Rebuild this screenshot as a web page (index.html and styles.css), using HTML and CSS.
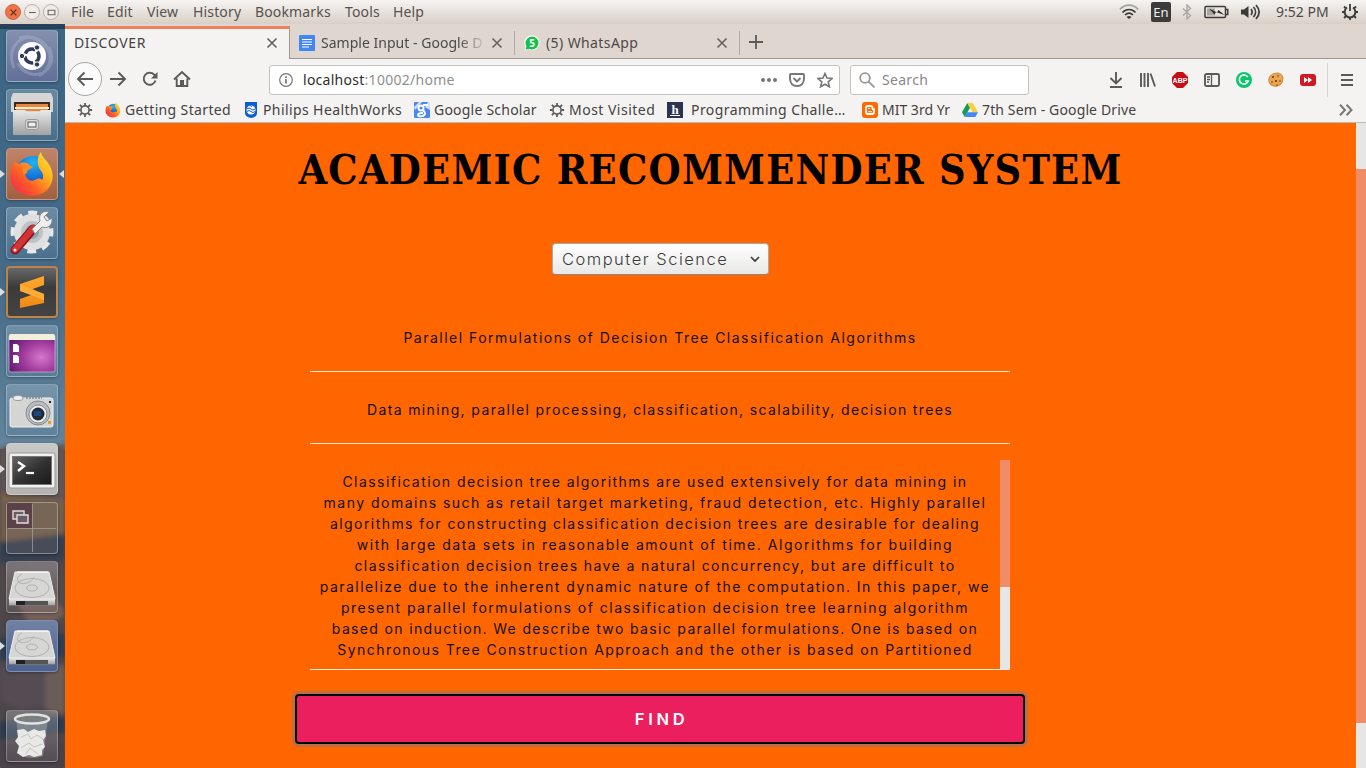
FILE: index.html
```html
<!DOCTYPE html>
<html lang="en">
<head>
<meta charset="utf-8">
<title>DISCOVER</title>
<link rel="stylesheet" href="styles.css">
</head>
<body>
<svg width="0" height="0" class="defs">
  <defs>
    <linearGradient id="metal" x1="0" y1="0" x2="0" y2="1"><stop offset="0" stop-color="#e9e9e9"/><stop offset="1" stop-color="#a2a2a2"/></linearGradient>
    <linearGradient id="blade" x1="0" y1="0" x2="0" y2="1"><stop offset="0" stop-color="#ffa92e"/><stop offset="1" stop-color="#f08a14"/></linearGradient>
    <radialGradient id="purple" cx=".7" cy=".6" r=".8"><stop offset="0" stop-color="#d578cd"/><stop offset=".5" stop-color="#a03a9c"/><stop offset="1" stop-color="#59196b"/></radialGradient>
    <linearGradient id="fire" x1="1" y1="0" x2="0" y2="1"><stop offset="0" stop-color="#fff04a"/><stop offset=".35" stop-color="#ffb01c"/><stop offset=".65" stop-color="#ff5a26"/><stop offset="1" stop-color="#e9205a"/></linearGradient>
    <radialGradient id="globe" cx=".5" cy=".2" r=".9"><stop offset="0" stop-color="#1fb6f2"/><stop offset=".6" stop-color="#1560d0"/><stop offset="1" stop-color="#3b2a96"/></radialGradient>
    <linearGradient id="screen" x1="0" y1="0" x2="1" y2="1"><stop offset="0" stop-color="#666"/><stop offset=".5" stop-color="#333"/><stop offset="1" stop-color="#191919"/></linearGradient>
    <symbol id="close" viewBox="0 0 12 12"><path d="M1.500 1.500l9 9M10.500 1.500l-9 9" stroke="#65625f" stroke-width="1.600" fill="none"/></symbol>
    <symbol id="firefox" viewBox="0 0 44 46">
      <circle cx="23" cy="22" r="17" fill="url(#globe)"/>
      <path d="M5 10C6 12 7 13 9 13C13 10 18 12 19 14L22 16C21 18 18 18 17 20C18 21 17 23 15 23C16 28 20 31 25 29C28 27 31 27 32 29C34 26 33 22 31 20C26 14 27 6 31 1C32 7 37 9 40 15C45 25 43 36 33 42C22 48 7 44 2 33C-1 25 1 16 5 10Z" fill="url(#fire)"/>
      <path d="M13 16C15 13 18 13 20 15L23 16C21 18 18 18 17 20C17 23 14 22 13 24" fill="#ff8a25"/>
    </symbol>
    <symbol id="gear" viewBox="0 0 18 18"><g fill="none" stroke="#5c5a58"><circle cx="9" cy="9" r="4.600" stroke-width="1.800"/><path d="M9 4V1M9 14v3M4 9H1M14 9h3M5.500 5.500l-2.300-2.300M12.500 12.500l2.300 2.300M5.500 12.500l-2.300 2.300M12.500 5.500l2.300-2.300" stroke-width="2"/></g></symbol>
    <symbol id="disk" viewBox="0 0 52 52">
      <path d="M9 11h34l6 27v7H3v-7z" fill="#777"/>
      <path d="M9 11h34l6 27H3z" fill="#d6d6d4" stroke="#f1f1f1"/>
      <path d="M3 38h46v6H3z" fill="url(#metal)"/><path d="M10 40h32v4H10z" fill="#555"/><path d="M10 40h9v4h-9z" fill="#222"/>
      <g fill="none" stroke="#b2b2b0"><ellipse cx="26" cy="27" rx="17" ry="9.500"/><ellipse cx="26" cy="27" rx="5.500" ry="3"/><path d="M16 13c-5 2-6 7-2 9s12-1 14-6"/></g>
      <path d="M11 11h31" stroke="#fff"/>
    </symbol>
  </defs>
</svg>

<header class="panel">
  <div class="window-buttons">
    <span class="wb wb-close"><svg viewBox="0 0 8 8"><path d="M1.500 1.500l5 5M6.500 1.500l-5 5"/></svg></span>
    <span class="wb"><svg viewBox="0 0 8 8"><path d="M1 4h6"/></svg></span>
    <span class="wb"><svg viewBox="0 0 8 8"><path d="M1 2h6v4H1z"/></svg></span>
  </div>
  <nav class="menu"><span>File</span><span>Edit</span><span>View</span><span>History</span><span>Bookmarks</span><span>Tools</span><span>Help</span></nav>
  <div class="indicators">
    <svg class="i-wifi" width="20" height="16" viewBox="0 0 20 16"><g fill="none" stroke-width="1.700"><path d="M.8 5.500C6-.3 14-.3 19.200 5.500" stroke="#a5a19d"/><path d="M3.500 8.500c3.700-4 9.300-4 13 0M6 11c2.400-2.300 5.600-2.300 8 0" stroke="#3c3b3a"/></g><path d="M7.500 13Q10 11 12.500 13L10 15z" fill="#3c3b3a"/></svg>
    <span class="lang">En</span>
    <svg class="i-bt" width="10" height="16" viewBox="0 0 10 16"><path d="M1 4.500l7.500 7L5 15V1l3.500 3.500L1 11.500" fill="none" stroke="#aaa6a2" stroke-width="1.400"/></svg>
    <svg class="i-bat" width="25" height="14" viewBox="0 0 25 14"><rect x="1" y="1.500" width="20.500" height="11" rx="1" fill="none" stroke="#3c3b3a" stroke-width="1.500"/><path d="M22 4.500h1.800v5H22" fill="none" stroke="#3c3b3a" stroke-width="1.400"/><path d="M3 3.500h8v7H3z" fill="#aaa6a2"/><path d="M5 3.500l8 4 1.500-2.500 6 5-8.500-3-1.500 2.500z" fill="#2e2d2c"/></svg>
    <svg class="i-vol" width="21" height="16" viewBox="0 0 21 16"><path d="M1 5.500h3L8.500 2v12L4 10.500H1z" fill="#3c3b3a"/><g fill="none" stroke="#3c3b3a" stroke-width="1.700"><path d="M11 5c1.500 2 1.500 4 0 6M13.500 3c2.700 3 2.700 7 0 10M16 1c4 4.500 4 9.500 0 14"/></g></svg>
    <span class="clock">9:52 PM</span>
    <svg class="i-pow" width="18" height="18" viewBox="0 0 18 18"><g fill="none" stroke="#3c3b3a"><path d="M6 4.500A5.400 5.400 0 1 0 12 4.500" stroke-width="2"/><path d="M9 1v7M9 14.500V17M3.500 9H1M14.500 9H17M4.700 5.200L3 3.500M13.300 5.200L15 3.500M5 13l-2 2M13 13l2 2" stroke-width="1.800"/></g></svg>
  </div>
</header>

<div class="desktop">
  <aside class="launcher">
    <svg class="wallpaper" width="65" height="744" viewBox="0 24 65 744" preserveAspectRatio="none">
      <defs><linearGradient id="sky" x1="0" y1="0" x2="0" y2="1"><stop offset="0" stop-color="#3c6684"/><stop offset=".6" stop-color="#466b89"/><stop offset="1" stop-color="#64859b"/></linearGradient><filter id="soft"><feGaussianBlur stdDeviation="2"/></filter></defs>
      <rect y="24" width="65" height="744" fill="#4b4649"/>
      <rect y="24" width="65" height="425" fill="url(#sky)"/>
      <g filter="url(#soft)">
        <path d="M0 448l14-3 16 5 16-2 20-5v70H0z" fill="#625457"/>
        <path d="M0 492l65 8v34L0 548z" fill="#73614e"/><path d="M0 542l65-8v25L0 562z" fill="#323f51"/>
        <path d="M0 566l30-4 35 4v60L30 640 0 610z" fill="#51484b"/><path d="M10 590l35-8 20 32-30 20z" fill="#74605a"/>
        <path d="M0 638l65-4v22l-65 4z" fill="#2c3c52"/><path d="M0 664l40-4 25 4v40l-45 6-20-10z" fill="#544b53"/>
        <path d="M45 670l20-5v50l-20-5z" fill="#6b5b57"/><path d="M0 722l65-6v16l-65 8z" fill="#2c3a50"/><path d="M0 742h65v26H0z" fill="#484349"/>
      </g>
      <path d="M0 24h65v5H0z" fill="#1b2f40" opacity=".65"/>
    </svg>
    <div class="tile t-dash"><svg viewBox="0 0 52 52"><g fill="none" stroke="#b6c0d8" stroke-opacity=".35" stroke-width="3"><path d="M8 38C-3 12 26-4 40 18M43 17c12 26-20 38-31 16M13 8c27-8 43 24 20 38"/></g><circle cx="26" cy="26" r="14" fill="#fff"/><circle cx="26" cy="26" r="7" fill="none" stroke="#303b59" stroke-width="3.500" stroke-dasharray="12 2.660" stroke-dashoffset="5"/><g fill="#303b59" stroke="#fff" stroke-width="1"><circle cx="16" cy="26" r="2.700"/><circle cx="31" cy="17.500" r="2.700"/><circle cx="31" cy="34.500" r="2.700"/></g></svg></div>
    <div class="tile t-blue"><svg viewBox="0 0 52 52"><path d="M7 4h38l2 5v14H5V9z" fill="#d5d5d5"/><path d="M8 13h36v9H8z" fill="#3b2a20"/><path d="M10 15h32v7H10z" fill="#e98742"/><path d="M9 18h34v2H9z" fill="#fff0d0"/><path d="M7 21h12l2 2h12l2-2h10v25H7z" fill="url(#metal)"/><rect x="19.500" y="30.500" width="13" height="10" rx="2.500" fill="#ddd" stroke="#999"/><rect x="22" y="33" width="8" height="5" fill="#eee" stroke="#555"/></svg></div>
    <div class="tile t-fox run"><svg viewBox="0 0 52 52"><use href="#firefox" x="4" y="3" width="44" height="46"/></svg><i class="focus-mark"></i></div>
    <div class="tile t-blue"><svg viewBox="0 0 52 52"><circle cx="26" cy="25" r="18.500" fill="none" stroke="#e8e8e8" stroke-width="6" stroke-dasharray="8.500 6.030" stroke-dashoffset="4.200"/><circle cx="26" cy="25" r="13.500" fill="none" stroke="#e0e0e0" stroke-width="9"/><circle cx="26" cy="25" r="11" fill="#bcc2c6"/><circle cx="26" cy="25" r="7" fill="#90a3b3"/><path d="M9 43l18-21" stroke="#8d1718" stroke-width="9" stroke-linecap="round"/><path d="M9 42.500l18-21" stroke="#d33334" stroke-width="6.500" stroke-linecap="round"/><path d="M26 22l8-8c-2-7 3-11 9-9l-5 5 3 4 5-3c1 8-5 11-10 9l-7 7z" fill="#eee" stroke="#888"/><circle cx="9" cy="43" r="1.500" fill="#eee"/></svg></div>
    <div class="tile t-subl run"><svg viewBox="0 0 52 52"><path d="M14 18l24-8v9l-14 5 14 4v9l-24 5v-9l14-5-14-3z" fill="url(#blade)"/><path d="M14 18v7l24 9v-6z" fill="#ffac36"/></svg></div>
    <div class="tile t-blue"><svg viewBox="0 0 52 52"><rect x="3" y="10" width="46" height="37" rx="2" fill="url(#purple)" stroke="#e6c1e5" stroke-opacity=".6"/><path d="M3 11q0-2 2-2h42q2 0 2 2v4H3z" fill="#f1f0da"/><path d="M7 19h4l2 2v6H7zM7 30h4l2 2v6H7z" fill="#fff"/></svg></div>
    <div class="tile t-blue"><svg viewBox="0 0 52 52"><rect x="4" y="14" width="43" height="29" rx="2" fill="#d5d5d3" stroke="#f1f1f1"/><path d="M6 13q5-4 11 0z" fill="#ddd" stroke="#888"/><ellipse cx="12" cy="14" rx="5" ry="2.500" fill="#eee" stroke="#999"/><path d="M20 14h16" stroke="#888" stroke-width="1.500" stroke-dasharray="2 1"/><circle cx="32" cy="29" r="12" fill="#b7bec5" stroke="#888"/><circle cx="32" cy="30" r="9" fill="#ececec" stroke="#888"/><circle cx="32" cy="30" r="6.500" fill="#222b35"/><path d="M28 27h7v5h-7z" fill="#1c4382"/><path d="M42 37h3v3h-3z" fill="#f8991d"/><path d="M43 17h2v2h-2z" fill="#222"/></svg></div>
    <div class="tile t-term run"><svg viewBox="0 0 52 52"><rect x="3" y="10" width="46" height="35" rx="2" fill="#f1f1ef" stroke="#999"/><rect x="6.500" y="13.500" width="39" height="28" fill="url(#screen)" stroke="#777"/><path d="M12 19l6 4-6 5" fill="none" stroke="#fff" stroke-width="2.400"/><path d="M20 30h8" stroke="#fff" stroke-width="2.200"/></svg></div>
    <div class="tile t-work"><svg viewBox="0 0 52 52"><path d="M1 1h25v25H1z" fill="#4a2c3d" opacity=".6"/><path d="M26.500 2v48M2 26.500h48" stroke="#a7a4a4" stroke-opacity=".7"/><g fill="#6d5c66" stroke="#ddd" stroke-width="1.400"><path d="M7 9h11v8H7z"/><path d="M11 13h11v8H11z"/></g></svg></div>
    <div class="tile t-clear"><svg viewBox="0 0 52 52"><use href="#disk" width="52" height="52"/></svg></div>
    <div class="tile t-disk run"><svg viewBox="0 0 52 52"><use href="#disk" width="52" height="52"/></svg></div>
    <div class="tile t-clear trash"><svg viewBox="0 0 52 52"><path d="M10 9l5 37q11 4 22 0l5-37z" fill="#aeb4b5" opacity=".45"/><ellipse cx="26" cy="9" rx="17" ry="4.500" fill="#7b7f80" stroke="#e1e3e3" stroke-width="2.500"/><path d="M11 20l7-1 4 3 6-3 5 2 6-1 1 6-3 4 2 7-3 3v5l-8 2-5-2-6 2-6-4 2-7-4-5 3-4z" fill="#e8e8e7"/><path d="M15 27l7-3 3 5 6-4 6 4M15 38l8-5 5 4 8-3M20 44l4-6 8 6" fill="none" stroke="#c4c4c4"/></svg></div>
  </aside>

  <main class="browser">
    <div class="tabs">
      <div class="tab active"><span>DISCOVER</span><svg width="12" height="12"><use href="#close"/></svg></div>
      <div class="tab docs"><svg class="fav" width="16" height="16"><rect width="16" height="16" rx="1" fill="#4285f4"/><path d="M3 4.500h10M3 7h10M3 9.500h10M3 12h7" stroke="#fff" stroke-width="1.200"/></svg><span class="fade">Sample Input - Google D</span><svg width="12" height="12"><use href="#close"/></svg></div>
      <div class="tab wa"><svg class="fav" width="16" height="16" viewBox="0 0 16 16"><path d="M.5 15.500l1-4A7.500 7.500 0 1 1 5 14.600z" fill="#fff"/><circle cx="8" cy="8" r="6.500" fill="#12c04a"/><path d="M1.500 14.500l1-3.500 3 3z" fill="#12c04a"/><text x="8" y="11.700" class="badge-num">5</text></svg><span>(5) WhatsApp</span><svg width="12" height="12"><use href="#close"/></svg></div>
      <svg class="plus" width="14" height="14"><path d="M7 0v14M0 7h14" stroke="#5c5a58" stroke-width="1.800"/></svg>
    </div>

    <div class="toolbar">
      <div class="nav-buttons">
        <span class="back"><svg width="18" height="16" viewBox="0 0 18 16"><path d="M17 8H2M8.500 1.500L2 8l6.500 6.500"/></svg></span>
        <span><svg width="18" height="16" viewBox="0 0 18 16"><path d="M1 8h15M9.500 1.500L16 8l-6.500 6.500"/></svg></span>
        <span><svg width="16" height="16" viewBox="0 0 16 16"><path d="M13.500 9.500A6 6 0 1 1 12 3.500L14 5.500"/><path d="M15.500 1v6.500H9z" class="solid"/></svg></span>
        <span><svg width="18" height="18" viewBox="0 0 18 18"><path d="M1 9.500L9 2l8 7.500M3.700 8.500V16h10.600V8.500"/><path d="M7 10h4v6H7z" class="solid"/></svg></span>
      </div>
      <div class="urlbar">
        <svg width="14" height="14" viewBox="0 0 14 14"><circle cx="7" cy="7" r="6.300" fill="none" stroke="#777" stroke-width="1.200"/><path d="M7 6v4.500M7 3.200v1.700" stroke="#777" stroke-width="1.700"/></svg>
        <span class="url">localhost<em>:10002/home</em></span>
        <svg class="dots" width="16" height="4"><g fill="#777"><circle cx="2" cy="2" r="2"/><circle cx="8" cy="2" r="2"/><circle cx="14" cy="2" r="2"/></g></svg>
        <svg class="pocket" width="16" height="14" viewBox="0 0 16 14"><path d="M1 2q0-1 1-1h12q1 0 1 1v4q-.5 7-7 7T1 6zM4.500 5L8 8.500 11.500 5" fill="none" stroke="#777" stroke-width="1.900"/></svg>
        <svg class="star" width="16" height="16" viewBox="0 0 16 16"><path d="M8 1.500l2 4.500 5 .5-3.800 3.300 1.200 5L8 12.200l-4.400 2.600 1.200-5L1 6.500 6 6z" fill="none" stroke="#777" stroke-width="1.600"/></svg>
      </div>
      <div class="search"><svg width="16" height="16" viewBox="0 0 16 16"><circle cx="6" cy="6" r="4.800"/><path d="M9.500 9.500l6 6"/></svg><span>Search</span></div>
      <div class="actions">
        <span><svg width="14" height="16" viewBox="0 0 14 16"><path d="M7 0v10.500M1.500 6L7 11.500 12.500 6M1 15h12" class="ln"/></svg></span>
        <span><svg width="16" height="14" viewBox="0 0 16 14"><path d="M1 0v14M4.500 0v14M8 0v14M10.500 0.500L15 13.500" class="ln"/></svg></span>
        <span><svg width="16" height="16" viewBox="0 0 16 16"><path d="M5 0h6l5 5v6l-5 5H5l-5-5V5z" fill="#c70d15"/><text x="8" y="11" class="abp">ABP</text></svg></span>
        <span><svg width="16" height="14" viewBox="0 0 16 14"><rect x="1" y="1" width="14" height="12" rx="1.500" class="ln"/><path d="M7.500 1v12M3 4h3M3 6.500h3M3 9h2" class="ln thin"/></svg></span>
        <span><svg width="16" height="16" viewBox="0 0 16 16"><circle cx="8" cy="8" r="8" fill="#0bc56c"/><path d="M11.800 5A4.600 4.600 0 1 0 12.300 9H9" fill="none" stroke="#fff" stroke-width="1.600"/></svg></span>
        <span><svg width="16" height="16" viewBox="0 0 16 16"><path d="M9 1q5 0 6 5 0 5-3 7-5 3-9 0-4-4-1-9 3-3 7-3z" fill="#e9a650" stroke="#cf8a40"/><g fill="#75380f"><circle cx="5" cy="5" r="1"/><circle cx="10" cy="4" r=".8"/><circle cx="8" cy="9" r="1.100"/><circle cx="4" cy="10" r=".8"/><circle cx="12" cy="9" r=".8"/><circle cx="9" cy="13" r=".8"/></g></svg></span>
        <span><svg width="16" height="12" viewBox="0 0 16 12"><rect width="16" height="12" rx="3" fill="#cf1a25"/><path d="M4 3l4 3-4 3zM8 3l4 3-4 3z" fill="#fff"/></svg></span>
      </div>
      <svg class="burger" width="12" height="12"><path d="M0 1h12M0 6h12M0 11h12" stroke="#5c5a58" stroke-width="1.900"/></svg>
    </div>

    <div class="bookmarks">
      <span><svg width="16" height="16"><use href="#gear"/></svg></span>
      <span class="b-start"><svg width="16" height="16"><use href="#firefox"/></svg>Getting Started</span>
      <span class="b-phil"><svg width="16" height="16" viewBox="0 0 16 16"><path d="M2 0h12v11q0 4-6 5-6-1-6-5z" fill="#0b5ed7"/><circle cx="8" cy="8" r="4.500" fill="#fff"/><path d="M4 7q2-2 4 0t4 0M4 9.500q2-2 4 0t4 0M7 3.500l2 1" stroke="#0b5ed7" fill="none"/></svg>Philips HealthWorks</span>
      <span class="b-schol"><svg width="16" height="16" viewBox="0 0 16 16"><rect width="16" height="16" rx="1" fill="#4a86ef"/><path d="M0 5l5-5h3L1 8zM11 5l3-5h2v8z" fill="#cfe0ff"/><circle cx="7" cy="6" r="2.500" fill="none" stroke="#fff" stroke-width="2"/><path d="M9 3h5M9 8q4 4 0 6-5 1-5-1t5-2" fill="none" stroke="#fff" stroke-width="2"/></svg>Google Scholar</span>
      <span class="b-most"><svg width="16" height="16"><use href="#gear"/></svg>Most Visited</span>
      <span class="b-prog"><svg width="16" height="16" viewBox="0 0 16 16"><rect width="16" height="16" fill="#2b3353"/><text x="8" y="12" class="hlet">h</text><path d="M3 13.500h10" stroke="#fff"/></svg>Programming Challe…</span>
      <span class="b-mit"><svg width="16" height="16" viewBox="0 0 16 16"><rect width="16" height="16" rx="3" fill="#ff6a00"/><path d="M6 4h2.500q2 0 2 2t1.500 1.500v2.500q0 2-2 2H6q-2 0-2-2V6q0-2 2-2z" fill="none" stroke="#fff" stroke-width="1.800"/><path d="M6 6.500h2M6 9.700h4" stroke="#fff"/></svg>MIT 3rd Yr</span>
      <span class="b-drive"><svg width="16" height="14" viewBox="0 0 16 14"><path d="M5.300 0L0 9.300 2.700 14 8 4.700z" fill="#159c58"/><path d="M5.300 0h5.400L16 9.300h-5.400z" fill="#ffcd40"/><path d="M2.700 14l2.600-4.700H16L13.300 14z" fill="#4386f5"/></svg>7th Sem - Google Drive</span>
      <svg class="more" width="14" height="12" viewBox="0 0 14 12"><path d="M1 .8L6 6l-5 5.200M7.500.8L12.500 6l-5 5.200"/></svg>
    </div>

    <div class="viewport">
      <div class="page">
        <h1>ACADEMIC RECOMMENDER SYSTEM</h1>
        <div class="form">
          <div class="select"><span>Computer Science</span><svg width="10" height="7" viewBox="0 0 10 7"><path d="M1 1l4 4 4-4" fill="none" stroke="#3c3b3a" stroke-width="1.700"/></svg></div>
          <div class="field f-title">Parallel Formulations of Decision Tree Classification Algorithms</div>
          <div class="field f-keys">Data mining, parallel processing, classification, scalability, decision trees</div>
          <div class="area">
            <p><span class="l1">Classification decision tree algorithms are used extensively for data mining in</span><span class="l2">many domains such as retail target marketing, fraud detection, etc. Highly parallel</span><span class="l3">algorithms for constructing classification decision trees are desirable for dealing</span><span class="l4">with large data sets in reasonable amount of time. Algorithms for building</span><span class="l5">classification decision trees have a natural concurrency, but are difficult to</span><span class="l6">parallelize due to the inherent dynamic nature of the computation. In this paper, we</span><span class="l7">present parallel formulations of classification decision tree learning algorithm</span><span class="l8">based on induction. We describe two basic parallel formulations. One is based on</span><span class="l9">Synchronous Tree Construction Approach and the other is based on Partitioned</span></p>
            <div class="area-scroll"><i></i></div>
          </div>
          <div class="find">FIND</div>
        </div>
      </div>
      <div class="page-scroll"><i></i></div>
    </div>
  </main>
</div>
</body>
</html>
```
FILE: styles.css
```css
* { box-sizing: border-box; }
body { margin: 0; width: 1366px; height: 768px; overflow: hidden; font: 14px/20px "Noto Sans", "Open Sans", sans-serif; color: #4c4a48; }
svg { display: block; flex: none; }
.defs { position: absolute; }

.panel { height: 24px; display: flex; align-items: center; background: linear-gradient(#f6f4f2, #d9cfc6); }
.window-buttons { display: flex; gap: 3px; width: 71px; padding-left: 5px; }
.wb { width: 16px; height: 16px; border-radius: 50%; border: 1px solid #b9b0a7; background: #f1ece7; display: grid; place-items: center; }
.wb svg { width: 9px; height: 9px; fill: none; stroke: #6b655f; }
.wb-close { background: #ef7347; border-color: #c8694b; }
.wb-close svg { stroke: #5a2a19; }
.menu { display: grid; grid-template-columns: 36px 40px 46px 62px 90px 48px 40px; color: #56524e; white-space: nowrap; letter-spacing: .15px; }
.indicators { margin-left: auto; display: flex; align-items: center; padding-right: 7px; }
.lang { width: 20px; height: 20px; margin: 0 12px; background: #3c3b3a; border-radius: 2px; color: #eee; font-size: 13px; text-align: center; }
.i-bat { margin: 0 11px 0 12px; }
.i-bt { margin-left: -1px; }
.clock { width: 53px; margin: 0 12px 0 15px; white-space: nowrap; color: #4c4a48; }

.desktop { display: flex; height: 744px; }
.launcher { position: relative; width: 65px; display: flex; flex-direction: column; gap: 7px; padding: 6px 7px 6px 6px; border-right: 1px solid #70a3bb; }
.wallpaper { position: absolute; left: 0; top: 0; }
.tile { position: relative; width: 52px; height: 52px; flex: none; border-radius: 4px; border: 1px solid rgba(200,220,235,.4); box-shadow: 0 1px 3px rgba(0,0,0,.3); }
.tile svg { width: 52px; height: 52px; margin: -1px; }
.t-dash { background: linear-gradient(#8590ad, #626f98); }
.t-blue { background: linear-gradient(rgba(155,180,200,.45), rgba(90,125,155,.3)); }
.t-fox { background: linear-gradient(#c08468, #a4603e); border-color: #c59a84; }
.t-subl { background: linear-gradient(#676767, #3b3b3b 40%, #444); border: 2px solid #bd8448; }
.t-subl svg { margin: -2px; }
.t-term { background: linear-gradient(#c9c9c8, #b4b3b2); border-color: #ccc; }
.t-work { background: rgba(130,115,110,.25); border-color: rgba(220,210,210,.45); }
.t-clear { background: linear-gradient(rgba(190,185,190,.4), rgba(130,120,125,.2)); border-color: rgba(210,200,200,.4); }
.t-disk { background: linear-gradient(#7181a3, #4b608e); border-color: #7f8fb0; }
.trash { margin-top: auto; }
.run::before { content: ""; position: absolute; left: -7px; top: 21px; border: 4px solid transparent; border-left: 5px solid #ddd; border-right: 0; }
.t-subl.run::before { left: -8px; top: 20px; }
.focus-mark { position: absolute; right: -7px; top: 21px; border: 4px solid transparent; border-right: 5px solid #ddd; border-left: 0; }

.browser { flex: 1; min-width: 0; display: flex; flex-direction: column; background: #f4f3f2; }
.tabs { height: 35px; display: flex; align-items: flex-end; background: #dfd6d0; border-bottom: 1px solid #9f9690; }
.tab { height: 32px; width: 225px; display: flex; align-items: center; padding: 2px 12px 0 9px; white-space: nowrap; }
.tab > svg:last-child { margin-left: auto; }
.tab.active { height: 33px; padding: 0 11px 2px 9px; background: #f4f3f2; border-top: 3px solid #ef8059; border-right: 1px solid #9f9690; margin-bottom: -1px; color: #45423f; }
.tab.active span { letter-spacing: .65px; }
.fav { margin-right: 6px; }
.fade { width: 163px; letter-spacing: .02px; -webkit-mask-image: linear-gradient(90deg, #000 138px, transparent 166px); mask-image: linear-gradient(90deg, #000 138px, transparent 166px); }
.wa span { letter-spacing: .4px; }
.tab.docs::after, .tab.wa::after { content: ""; width: 1px; height: 24px; background: #b4aaa4; margin: 0 -12px 0 11px; }
.badge-num { font: bold 10px "Noto Sans", sans-serif; fill: #fff; text-anchor: middle; letter-spacing: 0; }
.plus { margin: 0 0 9px 9px; }

.toolbar { height: 41px; display: flex; align-items: center; }
.nav-buttons { display: grid; grid-template-columns: 35px 30px 34px 30px; align-items: center; width: 204px; padding: 0 0 2px 3px; }
.nav-buttons span { display: grid; place-items: center; }
.nav-buttons svg { fill: none; stroke: #5c5a58; stroke-width: 1.9; }
.nav-buttons .solid { fill: #5c5a58; stroke: none; }
.nav-buttons .back { width: 34px; height: 34px; border: 1px solid #aaa7a4; border-radius: 50%; background: #fbfbfb; }
.urlbar, .search { height: 30px; background: #fff; border: 1px solid #c4c1be; border-radius: 3px; display: flex; align-items: center; }
.urlbar { width: 571px; padding: 0 6px 0 9px; }
.url { margin-left: 10px; color: #2e2d2c; letter-spacing: .27px; }
.url em { font-style: normal; color: #8f8f8f; }
.dots { margin-left: auto; }
.pocket { margin: 0 12px; }
.search { width: 179px; margin-left: 10px; padding-left: 8px; color: #8a8886; letter-spacing: .3px; }
.search svg { margin-right: 7px; fill: none; stroke: #999; stroke-width: 1.8; }
.actions { margin-left: 71px; height: 34px; width: 228px; border-right: 1px solid #d4d2d0; display: flex; align-items: center; }
.actions span { width: 32px; display: grid; place-items: center; }
.ln { fill: none; stroke: #5c5a58; stroke-width: 1.9; }
.thin { stroke-width: 1.3; }
.abp { font: bold 7px "Liberation Sans", sans-serif; fill: #fff; text-anchor: middle; }
.burger { margin-left: 13px; }

.bookmarks { height: 23px; display: grid; grid-template-columns: 28px 138px 171px 135px 118px 195px 100px 376px 14px; align-items: center; padding: 0 0 3px 12px; border-bottom: 1px solid #bfbdbb; white-space: nowrap; color: #45423f; }
.bookmarks span { display: flex; align-items: center; gap: 4px; height: 20px; }
.bookmarks .b-prog { gap: 8px; letter-spacing: .42px; }
.b-start { letter-spacing: .36px; }
.b-phil { letter-spacing: .4px; }
.b-schol { letter-spacing: .22px; }
.b-most { letter-spacing: .48px; }
.b-drive { letter-spacing: .13px; }
.more { justify-self: center; fill: none; stroke: #777; stroke-width: 2; margin-left: 2px; }
.hlet { font: bold 13px "Liberation Serif", serif; fill: #fff; text-anchor: middle; letter-spacing: 0; }

.viewport { flex: 1; display: flex; min-height: 0; background: #f60; }
.page { width: 1291px; color: #111; }
h1 { margin: 21px 0 0; height: 52px; font: bold 41px/52px "DejaVu Serif Condensed", "DejaVu Serif", serif; font-stretch: condensed; letter-spacing: 1.25px; text-align: center; color: #000; white-space: nowrap; }
.form { width: 730px; margin: 47px 0 0 230px; font-family: Inter, sans-serif; letter-spacing: 1.4px; display: flex; flex-direction: column; align-items: center; white-space: nowrap; }
.select { width: 217px; height: 32px; margin-left: 1px; padding: 0 8px 0 9px; display: flex; align-items: center; justify-content: space-between; font-size: 16.500px; font-weight: 300; letter-spacing: 1.5px; color: #3c3c3c; background: linear-gradient(#fff, #e8e8e7); border: 1px solid #aaa9a7; border-bottom-color: #888; border-radius: 4px; }
.field { width: 700px; height: 72px; padding-top: 28px; line-height: 20px; text-align: center; border-bottom: 1px solid #ffe9d0; }
.f-title { margin-top: 25px; letter-spacing: 1.49px; }
.f-keys { letter-spacing: 1.37px; }
.area { width: 700px; height: 210px; margin-top: 16px; display: flex; }
.area p { flex: 1; margin: 0; padding-top: 11px; line-height: 21px; text-align: center; border-bottom: 1px solid #fff0e0; }
.area p span { display: block; }
.l1 { letter-spacing: 1.45px; }
.l2 { letter-spacing: 1.48px; }
.l3 { letter-spacing: 1.44px; }
.l4 { letter-spacing: 1.53px; }
.l5 { letter-spacing: 1.4px; }
.l6 { letter-spacing: 1.46px; }
.l7 { letter-spacing: 1.48px; }
.l8 { letter-spacing: 1.35px; }
.l9 { letter-spacing: 1.44px; }
.area-scroll { width: 10px; background: #e6e6e6; }
.area-scroll i { display: block; height: 127px; background: #f08d68; }
.find { width: 730px; height: 50px; margin-top: 24px; border: 2px solid #000; border-radius: 4px; box-shadow: 0 0 0 3px #bf6e42; background: #eb1f5d; color: #fff; font: 600 16.5px/46px Inter, sans-serif; letter-spacing: 3.7px; text-align: center; text-indent: 3px; }
.page-scroll { width: 10px; background: #e6e6e6; padding-top: 46px; border-left: 1px solid #f1efed; }
.page-scroll i { display: block; height: 554px; margin-left: -1px; background: #f08d68; }
```
